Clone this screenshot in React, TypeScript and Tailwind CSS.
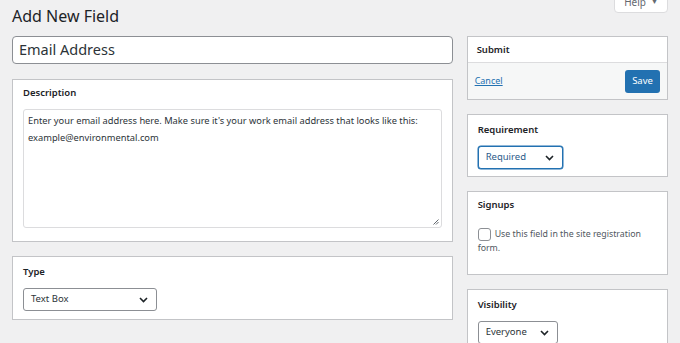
import React from 'react';

const Chevron = ({ className = '' }: { className?: string }) => (
  <svg width="9" height="6" viewBox="0 0 9 6" className={className}>
    <path d="M1 1l3.5 3.5L8 1" fill="none" stroke="currentColor" strokeWidth="1.6" />
  </svg>
);

const Select = ({ label, width, active = false }: { label: string; width: string; active?: boolean }) => (
  <div
    className={`flex items-center justify-between h-[23px] rounded-[3px] bg-white pl-[7px] pr-[8px] text-[9.5px] ${width} ${
      active ? 'border border-[#2271b1] text-[#2c5b8a] shadow-[0_0_0_0.5px_#2271b1]' : 'border border-[#8c8f94] text-[#2c3338]'
    }`}
  >
    <span>{label}</span>
    <Chevron className="text-[#1d2327]" />
  </div>
);

const Box = ({ title, children, className = '', top = 'pt-[8px]' }: any) => (
  <div className={`bg-white border border-[#c3c4c7] ${className}`}>
    <h3 className={`px-[10px] ${top} text-[9.5px] font-semibold leading-[14px] text-[#1d2327]`}>{title}</h3>
    {children}
  </div>
);

export default function App() {
  return (
    <div className="relative h-[343px] overflow-hidden bg-[#f0f0f1] font-['Noto_Sans',sans-serif] text-[#1d2327]">
      {/* screen meta tab */}
      <div className="absolute right-[12px] top-[-8px] flex h-[21px] w-[54px] items-center justify-center gap-[5px] rounded-b-[4px] border border-[#dcdcde] bg-white text-[10px] text-[#646970]">
        <span>Help</span>
        <span className="text-[7px]">▼</span>
      </div>

      <div className="px-[12px]">
        <h1 className="h-[36px] pt-[1px] text-[16px] leading-[30px] text-[#1d2327]">Add New Field</h1>

        <div className="flex gap-[14px]">
          {/* main column */}
          <div className="flex w-[442px] flex-col">
            <div className="flex h-[28px] items-center rounded-[4px] border border-[#8c8f94] bg-white px-[6px] text-[14.5px] text-[#2c3338]">
              Email Address
            </div>

            <Box title="Description" className="mt-[15px] h-[163px]" top="pt-[6px]">
              <div className="relative mx-[10px] mt-[9px] h-[119px] rounded-[3px] border border-[#dcdcde] px-[4px] pt-[2px] text-[9.3px] leading-[17px] text-[#2c3338]">
                Enter your email address here. Make sure it's your work email address that looks like this:
                <br />
                example@environmental.com
                <svg width="6" height="6" viewBox="0 0 6 6" className="absolute bottom-[2px] right-[2px]">
                  <path d="M0.5 5.5L5.5 0.5M3 5.5L5.5 3" stroke="#50575e" strokeWidth="0.9" />
                </svg>
              </div>
            </Box>

            <Box title="Type" className="mt-[14px] h-[64px]">
              <div className="px-[10px] pt-[9px]">
                <Select label="Text Box" width="w-[134px]" />
              </div>
            </Box>
          </div>

          {/* side column */}
          <div className="flex w-[202px] flex-col gap-[14px]">
            <div className="h-[64px] border border-[#c3c4c7] bg-white">
              <h3 className="h-[26px] border-b border-[#dcdcde] px-[9px] text-[9.5px] font-semibold leading-[26px]">Submit</h3>
              <div className="flex h-[36px] items-center justify-between bg-[#f6f7f7] pl-[7px] pr-[7px]">
                <a className="text-[9px] text-[#2271b1] underline">Cancel</a>
                <button className="h-[23px] w-[35px] rounded-[3px] bg-[#2271b1] text-[9.5px] text-white">Save</button>
              </div>
            </div>

            <Box title="Requirement" className="h-[63px]">
              <div className="px-[10px] pt-[9px]">
                <Select label="Required" width="w-[85px]" active />
              </div>
            </Box>

            <Box title="Signups" className="h-[84px]" top="pt-[6px]">
              <div className="flex px-[10px] pt-[15px]">
                <span className="mt-[1px] h-[13px] w-[13px] shrink-0 rounded-[3px] border border-[#8c8f94] bg-white" />
              </div>
              <p className="-mt-[14px] px-[10px] indent-[17px] text-[8.8px] leading-[14px] text-[#50575e]">
                Use this field in the site registration form.
              </p>
            </Box>

            <Box title="Visibility" className="h-[70px]">
              <div className="px-[10px] pt-[9px]">
                <Select label="Everyone" width="w-[80px]" />
              </div>
            </Box>
          </div>
        </div>
      </div>
    </div>
  );
}
